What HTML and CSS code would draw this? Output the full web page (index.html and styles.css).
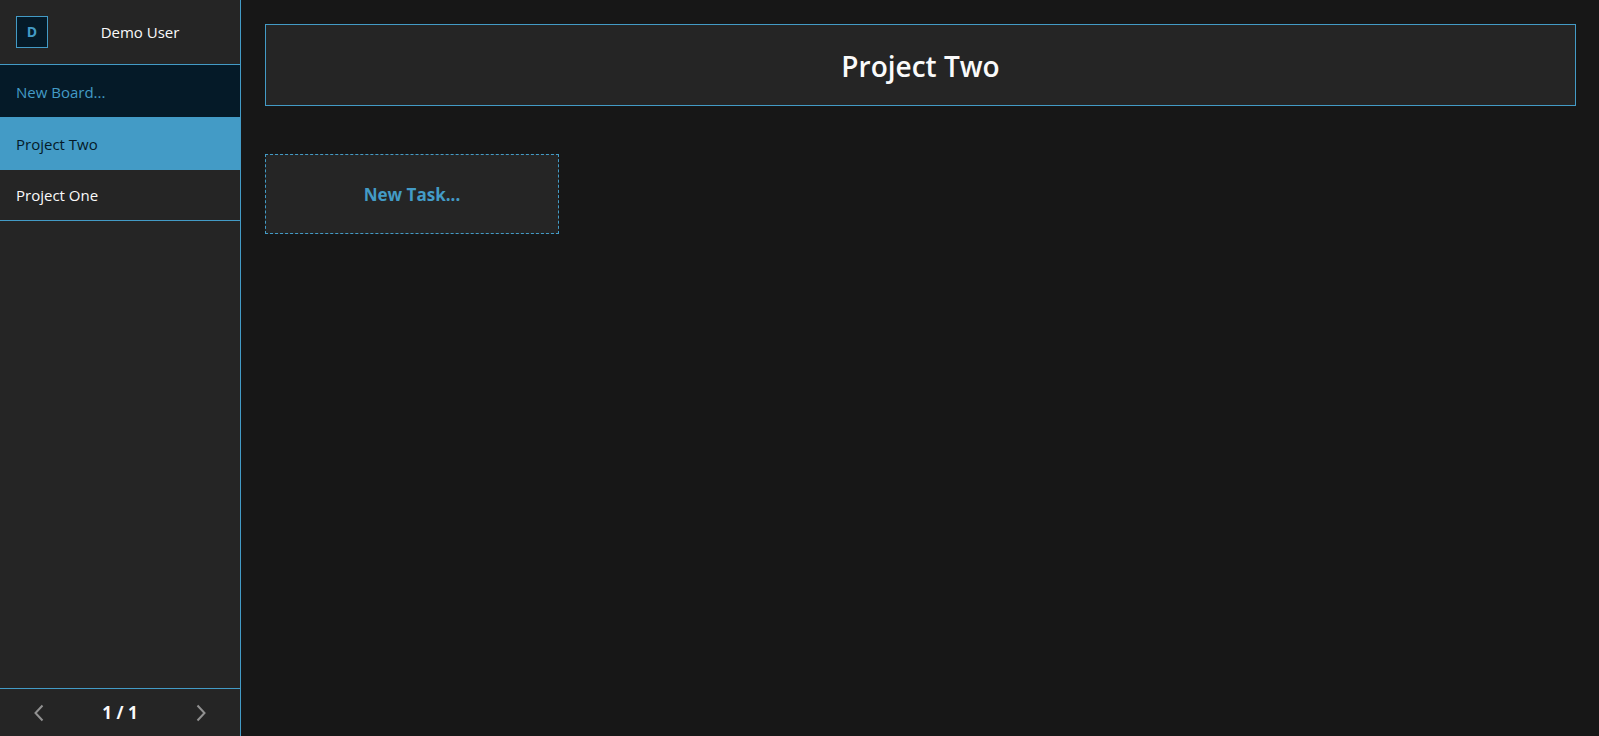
FILE: index.html
```html
<!DOCTYPE html>
<html lang="en">
<head>
<meta charset="utf-8">
<meta name="viewport" content="width=device-width, initial-scale=1">
<title>Project Two</title>
<link rel="stylesheet" href="styles.css">
</head>
<body>
<div class="app">
  <aside class="sidebar">
    <header class="user">
      <span class="avatar">D</span>
      <span class="user-name">Demo User</span>
    </header>
    <nav class="boards" aria-label="Boards">
      <button class="board board-new" type="button">New Board...</button>
      <a class="board board-active" href="#two" aria-current="page">Project Two</a>
      <a class="board" href="#one">Project One</a>
    </nav>
    <footer class="pager">
      <button class="pager-button" type="button" aria-label="Previous page">
        <svg class="chevron" viewBox="0 0 10 18" aria-hidden="true"><path d="M8.500 1.500 1.500 9l7 7.500"/></svg>
      </button>
      <span class="pager-count">1 / 1</span>
      <button class="pager-button" type="button" aria-label="Next page">
        <svg class="chevron" viewBox="0 0 10 18" aria-hidden="true"><path d="M1.500 1.500 8.500 9l-7 7.500"/></svg>
      </button>
    </footer>
  </aside>
  <main class="content">
    <h1 class="title">Project Two</h1>
    <div class="tasks">
      <button class="task-new" type="button">New Task...</button>
    </div>
  </main>
</div>
</body>
</html>
```
FILE: styles.css
```css
:root {
  --accent: #439bc6;
  --navy: #051a28;
  --panel: #252525;
  --page: #171717;
  --text: #fafafa;
}

* {
  box-sizing: border-box;
}

body {
  margin: 0;
  background: var(--page);
  color: var(--text);
  font: 15px/24px "Segoe UI", "Open Sans", "Noto Sans", sans-serif;
}

button {
  font: inherit;
  cursor: pointer;
}

.app {
  display: flex;
  min-height: 100vh;
}

.sidebar {
  display: flex;
  flex-direction: column;
  flex: 0 0 241px;
  background: var(--panel);
  border-right: 1px solid var(--accent);
}

.user {
  display: flex;
  align-items: center;
  gap: 8px;
  padding: 16px;
  border-bottom: 1px solid var(--accent);
}

.avatar {
  display: grid;
  place-items: center;
  width: 32px;
  height: 32px;
  border: 1px solid var(--accent);
  background: var(--navy);
  color: var(--accent);
  font-size: 14px;
  font-weight: 700;
}

.user-name {
  flex: 1;
  text-align: center;
}

.boards {
  display: flex;
  flex-direction: column;
  border-bottom: 1px solid var(--accent);
}

.board {
  padding: 13px 16px;
  border: 0;
  color: var(--text);
  text-align: left;
  text-decoration: none;
}

.board-new {
  padding: 15px 16px 13px;
  background: var(--navy);
  color: var(--accent);
}

.board-active {
  padding: 15px 16px 14px;
  background: var(--accent);
  color: var(--navy);
}

.pager {
  display: flex;
  align-items: center;
  justify-content: space-around;
  margin-top: auto;
  padding-top: 8px;
  padding-bottom: 7px;
  border-top: 1px solid var(--accent);
}

.pager-button {
  display: grid;
  place-items: center;
  width: 32px;
  height: 32px;
  padding: 0;
  border: 0;
  background: none;
  color: #919191;
}

.pager-count {
  font-size: 17px;
  font-weight: 700;
}

.chevron {
  width: 10px;
  height: 18px;
  fill: none;
  stroke: currentColor;
  stroke-width: 2;
}

.content {
  flex: 1;
  padding: 24px 23px 24px 24px;
}

.title {
  margin: 0 0 48px;
  padding: 21px 20px 19px;
  border: 1px solid var(--accent);
  background: var(--panel);
  font-size: 28px;
  font-weight: 600;
  line-height: 40px;
  text-align: center;
}

.tasks {
  display: grid;
  grid-template-columns: repeat(auto-fill, 294px);
  gap: 24px;
}

.task-new {
  padding: 28px 27px 26px;
  border: 1px dashed var(--accent);
  background: var(--panel);
  color: var(--accent);
  font-size: 17px;
  font-weight: 700;
}
```
